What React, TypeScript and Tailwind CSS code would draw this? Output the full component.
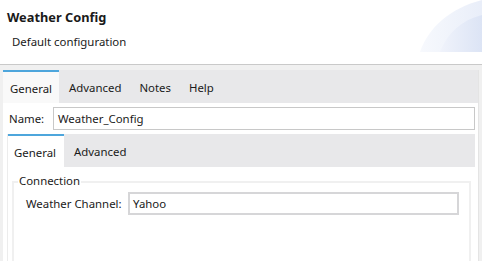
import React from "react";

export default function App() {
  const font = { fontFamily: '"Noto Sans", "Open Sans", sans-serif' };
  return (
    <div className="w-[482px] h-[261px] overflow-hidden bg-[#f0f0f0] text-[#1a1a1a]" style={font}>
      {/* Header */}
      <div className="relative h-[65px] bg-white border-b border-[#c9c9c9]">
        <svg className="absolute right-0 top-0" width="62" height="53" viewBox="0 0 62 53">
          <defs>
            <linearGradient id="g1" x1="0" y1="0" x2="1" y2="0">
              <stop offset="0" stopColor="#f7f9fd" />
              <stop offset="1" stopColor="#e9eef9" />
            </linearGradient>
            <linearGradient id="g2" x1="0" y1="0" x2="1" y2="0">
              <stop offset="0" stopColor="#f0f3fb" />
              <stop offset="1" stopColor="#dce4f5" />
            </linearGradient>
          </defs>
          <path d="M0 52 C 8 28, 30 8, 62 0 L62 52 Z" fill="url(#g1)" />
          <path d="M20 52 C 28 32, 42 20, 62 15 L62 52 Z" fill="url(#g2)" />
        </svg>
        <div className="absolute left-[7px] top-[7px] text-[12.8px] font-bold leading-[20px]">Weather Config</div>
        <div className="absolute left-[12px] top-[33px] text-[11.4px] leading-[18px]">Default configuration</div>
      </div>

      {/* Outer folder */}
      <div className="pt-[5px] pl-[3px] pr-[3px]">
        <div className="bg-white border-r border-[#e4e4e4]">
          <div className="flex h-[33px] bg-[#e8e8ea] text-[11.4px]">
            <div className="w-[56px] bg-[#f9f9f9] border-t-2 border-[#4ea6dc] flex items-center pl-[7px] pt-[3px]">General</div>
            <div className="flex items-center pl-[10px] pt-[3px]">Advanced</div>
            <div className="flex items-center pl-[18px] pt-[3px]">Notes</div>
            <div className="flex items-center pl-[18px] pt-[3px]">Help</div>
          </div>
          <div className="pt-[4px] pl-[6px] pr-[3px] flex items-center text-[11.4px]">
            <span className="w-[44px] pt-[1px]">Name:</span>
            <div className="flex-1 h-[23px] border border-[#c8c8c8] flex items-center pl-[4px] pt-[1px]">Weather_Config</div>
          </div>

          {/* Inner folder */}
          <div className="mt-[4px] ml-[4px] mr-[3px] border-l border-[#ececec] h-[200px]">
            <div className="flex h-[33px] bg-[#e8e8ea] text-[11.4px]">
              <div className="w-[56px] bg-white border-t-2 border-[#4ea6dc] flex items-center pl-[6px] pt-[3px]">General</div>
              <div className="flex items-center pl-[10px] pt-[3px]">Advanced</div>
            </div>
            <div className="pl-[4px] pr-[4px] pt-[7px] bg-white">
              <div className="relative border-2 border-[#f0f0f0] h-[120px] mt-[7px]">
                <span className="absolute -top-[10px] left-[4px] bg-white px-[1px] text-[11.4px] leading-[16px]">Connection</span>
                <div className="flex items-center pt-[9px] pl-[12px] pr-[10px] text-[11.4px]">
                  <span className="w-[102px] pt-[1px]">Weather Channel:</span>
                  <div className="flex-1 h-[23px] border-2 border-[#d6d6d8] flex items-center pl-[3px] pt-[1px]">Yahoo</div>
                </div>
              </div>
            </div>
          </div>
        </div>
      </div>
    </div>
  );
}
